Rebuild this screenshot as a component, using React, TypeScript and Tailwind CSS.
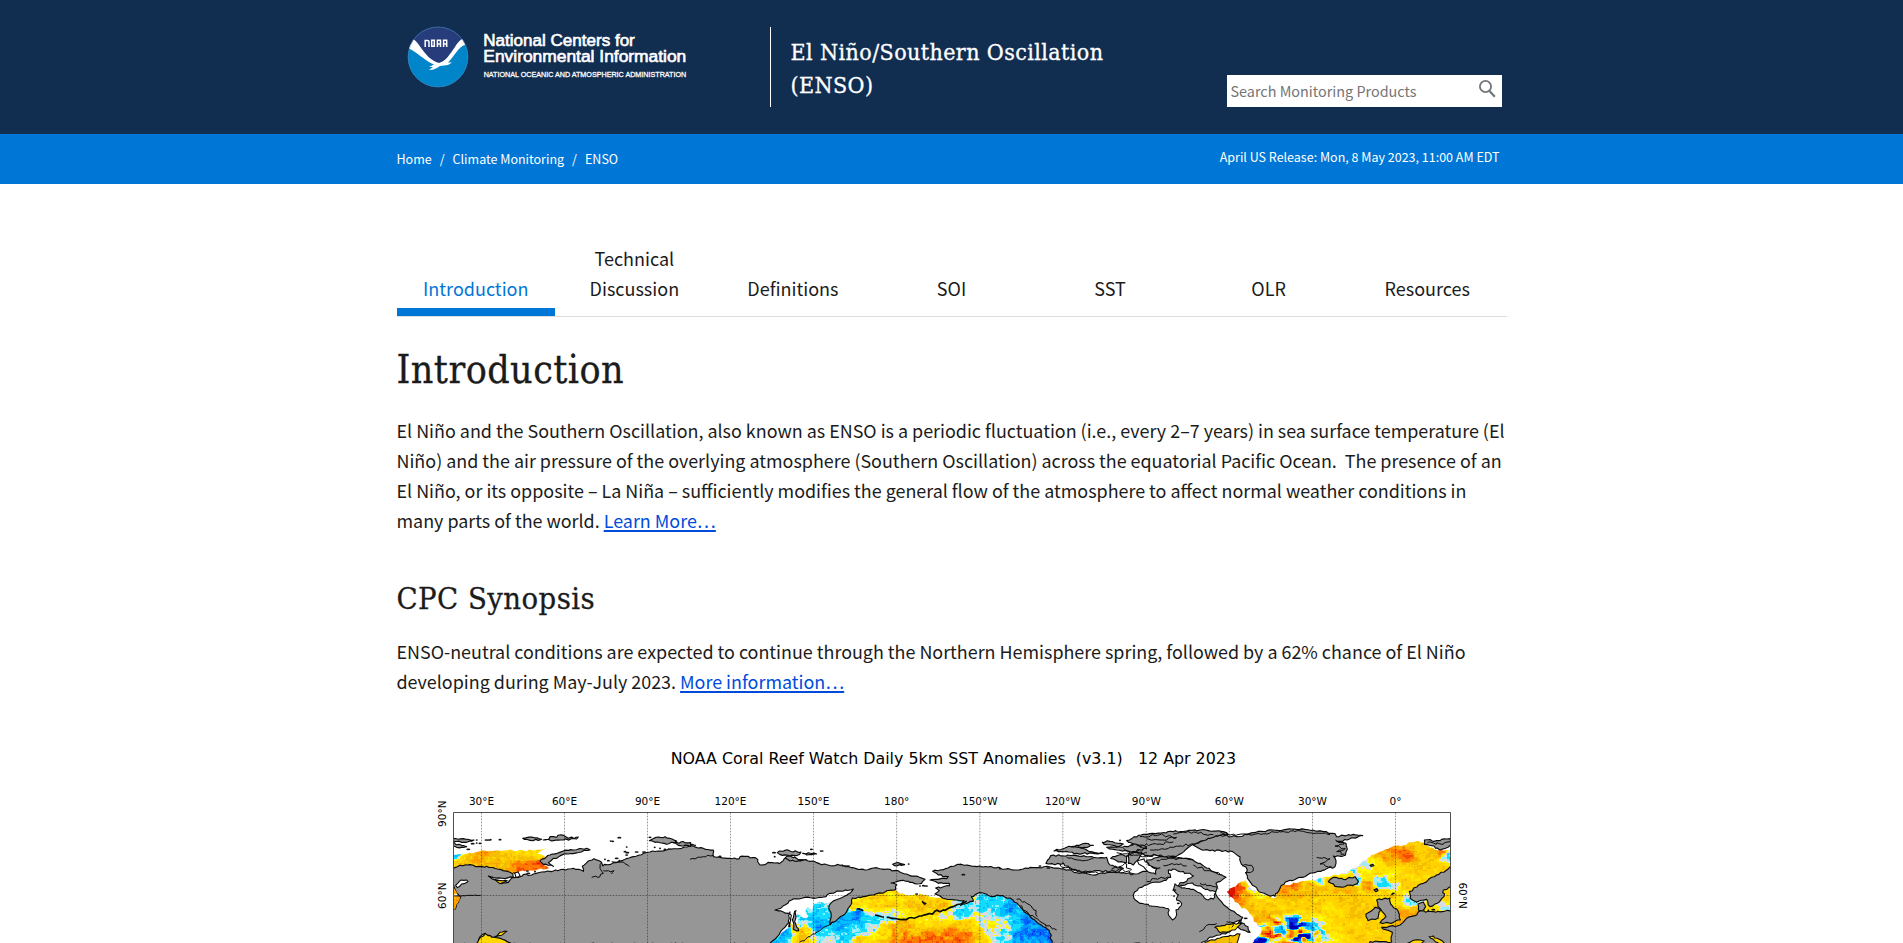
import React from 'react';

type Pt = [number, number];
type Control = [number, number, number];

/* Horizontal offsets of the four sections the coastline data is split into. */
const A = 0;
const B = 810;
const C = 1620;
const D = 2400;

const hash = (x: number, y: number) => {
  let h = (x * 374761393 + y * 668265263) | 0;
  h = Math.imul(h ^ (h >>> 13), 1274126177);
  return ((h ^ (h >>> 16)) >>> 0) / 4294967295;
};

const noise = (x: number, y: number) => {
  const xi = Math.floor(x);
  const yi = Math.floor(y);
  const u = x - xi;
  const v = y - yi;
  const su = u * u * (3 - 2 * u);
  const sv = v * v * (3 - 2 * v);
  const top = hash(xi, yi) * (1 - su) + hash(xi + 1, yi) * su;
  const bottom = hash(xi, yi + 1) * (1 - su) + hash(xi + 1, yi + 1) * su;
  return (top * (1 - sv) + bottom * sv) * 2 - 1;
};

const parse = (offset: number, s: string): Pt[] =>
  s.trim().split(/\s+/).map((p) => {
    const [x, y] = p.split(',').map(Number);
    return [x + offset, y] as Pt;
  });

/* Joins points, adding small deterministic wiggles so that a coast looks ragged. */
const coast = (pts: Pt[], rough = 3, closed = true) => {
  const out: string[] = [];
  const n = closed ? pts.length : pts.length - 1;
  for (let i = 0; i < n; i++) {
    const [x0, y0] = pts[i];
    const [x1, y1] = pts[(i + 1) % pts.length];
    const steps = Math.max(1, Math.round(Math.hypot(x1 - x0, y1 - y0) / 8));
    for (let k = 0; k < steps; k++) {
      const t = k / steps;
      const x = x0 + (x1 - x0) * t;
      const y = y0 + (y1 - y0) * t;
      const j = k === 0 ? 0 : rough;
      const dx = (hash(Math.round(x), Math.round(y)) - 0.5) * 2 * j;
      const dy = (hash(Math.round(y) + 71, Math.round(x)) - 0.5) * 2 * j;
      out.push(`${(x + dx).toFixed(1)},${(y + dy).toFixed(1)}`);
    }
  }
  if (!closed) out.push(pts[pts.length - 1].join(','));
  return 'M' + out.join('L') + (closed ? 'Z' : '');
};

const SCALE: [number, string][] = [
  [-3.2, '#0000b4'],
  [-2.6, '#0032e6'],
  [-2.1, '#0064ff'],
  [-1.6, '#0096ff'],
  [-1.1, '#00beff'],
  [-0.6, '#14dcff'],
  [-0.3, '#8cf0ff'],
  [0.15, '#dcdcdc'],
  [0.5, '#ffff00'],
  [1.0, '#ffe600'],
  [1.4, '#ffd200'],
  [1.8, '#f5be00'],
  [2.2, '#ffa000'],
  [2.7, '#ff7800'],
  [3.3, '#f54b00'],
  [9, '#dc1400'],
];

/* Strength of the swirling eddies around a point of the north-west Atlantic. */
const eddy = (x: number, y: number) => {
  const r = ((x - D - 205) / 105) ** 2 + ((y - 572) / 48) ** 2;
  return Math.exp(-r * r);
};

/* Interpolates the anomaly control points and returns one path per colour step. */
const seaCells = (
  x0: number, y0: number, x1: number, y1: number,
  controls: Control[], amp: number,
) => {
  const size = 4;
  const layers: Record<string, string> = {};
  for (let y = y0; y < y1; y += size) {
    let run = '';
    let start = x0;
    for (let x = x0; x <= x1 + size; x += size) {
      const wx = x + noise(x / 18, y / 18 + 9) * 13;
      const wy = y + noise(x / 18 + 60, y / 18) * 10;
      let sum = 0;
      let total = 0;
      for (const [cx, cy, v] of controls) {
        const d = (wx - cx) ** 2 + ((wy - cy) * 1.4) ** 2 + 110;
        const w = 1 / (d * d);
        sum += v * w;
        total += w;
      }
      const value = sum / total
        + noise(x / 30, y / 16) * amp * 0.7
        + noise(x / 11 + 40, y / 8) * amp * 0.9
        + noise(x / 5, y / 4.5) * amp * 0.7
        + eddy(x, y) * (noise(wx / 19 + 7, wy / 13 + 3) * 4.6 - 0.9);
      const colour = x > x1 ? '' : (SCALE.find(([limit]) => value < limit) || SCALE[15])[1];
      if (colour !== run) {
        if (run) {
          layers[run] = (layers[run] || '') + `M${start} ${y}H${x}V${y + size}H${start}Z`;
        }
        run = colour;
        start = x;
      }
    }
  }
  return Object.entries(layers);
};

const barents = seaCells(99, 320, 390, 404, [
  [110, 360, 1.6], [180, 350, 1.8], [240, 350, 1.4], [300, 340, 1.2], [350, 335, 1.1],
  [340, 368, 2.8], [300, 385, 2.6], [365, 380, 2.7], [250, 375, 1.8], [103, 348, -1.5], [140, 350, 1.5],
], 0.4);

const southWest = seaCells(99, 420, 290, 609, [
  [105, 480, 1.9], [200, 590, 1.3], [230, 605, 2], [250, 580, 1.1], [250, 420, 1.1],
], 0.35);

const pacific = seaCells(B + 230, 440, C + 300, 609, [
  [B + 285, 585, -1.9], [B + 262, 604, -1.2], [B + 330, 575, 1.6], [B + 335, 600, 1.3],
  [B + 340, 510, -0.6], [B + 370, 530, -1.2], [B + 375, 550, -1.6], [B + 400, 495, -0.8],
  [B + 395, 580, -1.0], [B + 440, 560, -1.3], [B + 480, 530, -1.5], [B + 500, 525, -2],
  [B + 470, 590, -0.9], [B + 520, 560, -0.6], [B + 545, 535, -0.5], [B + 560, 590, 1],
  [B + 500, 605, 1.6], [B + 400, 608, 0], [B + 500, 490, 0.9], [B + 545, 500, 0.5],
  [B + 560, 475, 0.9], [B + 600, 490, 1.1], [B + 600, 520, -0.4], [B + 660, 485, 1.2],
  [B + 700, 510, 1.1], [B + 750, 490, 1.4], [B + 620, 560, 1.6], [B + 680, 570, 1.9],
  [B + 650, 600, 2.6], [B + 720, 595, 2.8], [B + 740, 560, 1.4], [B + 780, 575, 2.3],
  [B + 790, 605, 2.8], [B + 780, 525, 0], [B + 800, 510, -0.7], [B + 690, 540, 1],
  [C + 10, 560, 1.4], [C + 15, 595, 2.4], [C + 50, 570, 1.2], [C + 60, 600, 1.2],
  [C + 15, 515, -0.8], [C + 40, 520, 0], [C + 65, 500, -1], [C + 80, 530, -0.3],
  [C + 90, 555, 0], [C + 100, 580, 0], [C + 130, 545, -0.2], [C + 125, 595, -0.4],
  [C + 110, 480, -0.8], [C + 145, 500, -1.6], [C + 165, 520, -1.4], [C + 170, 560, -1.2],
  [C + 190, 550, -1.9], [C + 220, 570, -2.3], [C + 250, 590, -2.2], [C + 180, 595, -1.7],
], 0.55);

const atlantic = seaCells(D - 70, 298, D + 693, 609, [
  [D + 30, 455, 4.2], [D + 40, 445, 3.4], [D + 55, 448, 2.8], [D + 72, 428, 1.3], [D + 100, 442, -0.4],
  [D + 40, 472, 3], [D + 52, 485, 2.2], [D + 75, 465, 1.5], [D + 108, 462, 0.4], [D + 80, 500, 1.7],
  [D + 120, 490, 1.3], [D + 100, 520, 1.6], [D + 125, 540, 1.8], [D + 130, 580, 0.3],
  [D + 108, 605, -3.4], [D + 165, 550, 2], [D + 210, 560, 0.6], [D + 260, 560, 0.4], [D + 290, 585, 0.2],
  [D + 185, 590, 0.6], [D + 330, 590, 0.6], [D + 345, 570, 0.9], [D + 160, 485, 1.3], [D + 200, 500, 1.2],
  [D + 240, 495, 1.1], [D + 210, 433, 2.4], [D + 190, 455, 1.9], [D + 230, 460, 1.6],
  [D + 290, 412, -0.6], [D + 280, 440, 1.6], [D + 350, 470, 1.5], [D + 390, 450, 1.7], [D + 360, 540, 1.2],
  [D + 300, 480, 1.4], [D + 320, 510, 1], [D + 420, 500, 1.4], [D + 400, 570, 1.3], [D + 380, 600, 1.1],
  [D + 440, 460, 1.2], [D + 400, 540, 1.3], [D + 390, 392, -0.9], [D + 340, 430, 1.5], [D + 380, 408, 1],
  [D + 425, 385, 0.4], [D + 440, 372, -0.2], [D + 470, 365, 1], [D + 415, 425, -0.9], [D + 435, 430, 2.4],
  [D + 450, 412, 0.7], [D + 480, 422, -0.5], [D + 492, 430, -1.2], [D + 510, 434, -0.2], [D + 470, 395, 1.1],
  [D + 490, 448, 1.1], [D + 500, 385, 1.1], [D + 525, 415, 1], [D + 490, 345, 2], [D + 530, 340, 2.4],
  [D + 560, 348, 2.7], [D + 600, 340, 1.5], [D + 580, 320, 1.3], [D + 640, 350, 1.4], [D + 620, 365, 1.3],
  [D + 684, 343, -1], [D + 665, 333, 2.3], [D + 600, 390, 1.2], [D + 650, 375, 1.2], [D + 550, 430, 1.4],
  [D + 550, 380, 1.2], [D + 568, 484, -0.6], [D + 550, 510, 1.8], [D + 570, 515, 1.8], [D + 530, 465, 1.3],
  [D + 680, 470, 1.1], [D + 668, 502, -0.4], [D + 640, 505, 1], [D + 470, 580, 1.2], [D, 580, 1.8],
  [D - 30, 600, 1.9],
], 0.36);

const barentsClip = coast(parse(A, '99,345 140,341 180,333 240,333 300,330 345,331 378,323 350,341 375,350 360,362 372,375 388,385 340,392 300,394 270,402 240,395 200,390 150,380 99,388'), 3);

const southWestClip = [
  coast(parse(A, '99,440 112,462 99,465'), 1),
  coast(parse(A, '99,468 122,470 114,488 106,507 99,507'), 2),
].join('');

const pacificClip = coast([
  ...parse(B, '236,612 262,592 298,560 300,530 330,498 380,482 420,485 440,520 487,478 520,468 560,460 590,450 616,450 630,462 700,464 740,474 800,480'),
  ...parse(C, '10,480 60,458 150,470 200,520 285,575 276,612'),
], 4);

const atlanticClip = coast(parse(D, '20,455 45,440 75,418 92,445 120,460 165,474 182,440 240,425 300,415 370,400 400,385 450,352 500,327 550,315 590,304 612,306 640,325 691,333 693,612 95,612 125,570 100,535 75,505 45,487'), 4);

const asia: Pt[] = [
  ...parse(A, '95,384 120,376 150,374 175,380 200,379 240,388 278,401 280,412 255,416 205,408 225,420 245,431 265,427 275,414 296,412 310,404 335,405 365,396 400,393 430,388 460,385 490,394 487,379 505,363 522,356 543,365 548,378 580,368 605,362 640,350 690,336 740,330 785,325'),
  ...parse(B, '0,318 70,330 70,350 120,355 148,356 150,350 196,353 210,375 240,368 268,371 290,352 325,360 370,363 395,374 450,376 490,383 525,390 560,383 600,388 650,402 705,418 695,430 675,431 640,421 622,424 603,429 620,434 617,449 560,461 520,470 487,474 485,490 470,515 445,536 420,555 424,528 417,500 425,487 455,473 482,458 490,447 450,453 420,460 408,470 380,474 345,472 305,480 285,495 255,510 280,516 298,520 302,540 280,566 262,590 238,612'),
  ...parse(A, '276,612 235,594 215,592 196,580 180,590 168,612 95,612 95,507 106,507 115,487 122,473 115,464 102,440 95,430'),
];

const northAmerica: Pt[] = [
  ...parse(B, '812,374 780,380 750,390 728,394 745,405 775,410 770,416 720,420 745,430 778,430 778,438 737,444 748,452 735,462 765,476 800,480'),
  ...parse(C, '12,482 2,497 40,484 34,470 60,458 78,462 95,470 112,465 150,474 172,490 190,512 206,524 218,537 245,556 268,572 276,612 722,612 745,595 780,585 810,575'),
  ...parse(D, '40,548 62,540 48,560 90,577 84,560 62,548 68,532 35,512 8,490 -15,458 -8,440 -12,430 0,425 18,412 -10,400 -40,384 -60,370 -100,355 -170,350'),
  ...parse(C, '560,360 568,380 600,384 560,394 525,402 490,398 450,397 410,404 360,400 310,386 270,381 220,383 165,390 110,383 60,378 0,372'),
];

const islands: Pt[][] = [
  parse(A, '95,295 130,296 162,300 140,307 95,303'),
  parse(A, '95,308 125,316 140,320 110,322 95,314'),
  parse(A, '360,362 390,345 430,333 500,325 510,329 445,342 400,355 385,368 400,379 370,373'),
  parse(A, '308,295 335,291 365,298 330,301'),
  parse(A, '370,300 400,290 430,286 445,295 475,291 470,297 430,300 400,302'),
  parse(A, '688,302 705,293 735,290 770,303 740,313 705,307'),
  parse(A, '762,309 790,305 812,308 812,319 775,316'),
  parse(B, '262,338 285,331 333,336 322,346 270,344'),
  parse(B, '338,340 380,342 350,345'),
  parse(B, '286,354 300,348 340,360 300,363'),
  parse(B, '608,373 625,368 644,374 620,378'),
  parse(C, '500,302 535,286 570,281 640,275 720,270 790,275 805,283 775,288 745,297 700,312 665,340 648,350 560,346 522,337 560,321 520,312'),
  parse(C, '282,333 320,322 350,320 380,330 430,340 350,340'),
  parse(C, '335,320 375,310 400,316 380,323'),
  parse(C, '427,307 450,304 490,312 470,320 440,314'),
  parse(C, '440,322 500,320 520,312 560,325 520,335 470,330'),
  parse(C, '258,370 272,347 340,346 400,352 440,352 450,375 490,385 470,398 420,392 370,396 330,387 310,369 285,374'),
  parse(C, '452,355 475,346 503,347 500,368 475,366'),
  parse(C, '508,340 545,336 540,350 520,375 505,370'),
  parse(C, '582,430 612,425 632,436 610,445 585,440'),
  [
    ...parse(D, '0,286 50,290 100,278 160,270 240,268 310,275 345,281 350,290 400,283 428,287 390,296 350,304 378,310 382,328 376,346 340,348 348,370 345,380 270,400 248,412 196,426 180,445 165,469 145,466 118,456 92,428 78,400 82,390 64,372 60,350 38,335 0,331'),
    ...parse(C, '750,332 722,328 700,316 745,295'),
  ],
  parse(D, '325,425 340,412 370,418 405,410 415,424 398,437 350,440'),
  parse(D, '613,300 650,302 691,296 700,315 660,330 635,317 613,313'),
  parse(D, '700,380 650,405 610,430 568,455 570,475 590,487 620,478 630,500 652,490 672,470 670,450 700,436'),
  parse(D, '594,492 610,486 617,500 606,514 595,510'),
  parse(D, '700,513 640,515 595,515 590,525 560,535 540,555 485,562 500,570 517,577 515,606 450,605 446,615 700,615'),
  parse(D, '470,480 510,474 512,492 535,515 541,540 510,550 480,548 498,530 480,505'),
  parse(D, '438,522 465,502 482,510 474,535 444,542'),
  parse(B, '318,512 314,545 326,572 310,568 307,540 314,514'),
  parse(D, '462,449 470,446 474,452 467,455'),
  parse(D, '450,376 458,373 462,377 453,379'),
];

const icyWater: Pt[][] = [
  parse(C, '520,465 535,445 570,430 605,425 632,412 625,390 645,388 660,395 690,400 700,408 680,424 660,428 658,440 645,432 640,450 655,465 650,480 665,490 655,508 648,510 650,525 638,540 626,526 625,506 600,502 540,490 526,480'),
  parse(C, '662,436 690,430 725,440 750,453 768,456 764,472 745,480 728,466 700,448 664,444'),
  parse(C, '532,362 552,357 565,375 590,388 587,402 565,396 545,377'),
  parse(A, '107,436 118,424 140,420 144,425 125,432 112,443'),
  parse(A, '280,398 294,396 300,406 288,412'),
  parse(B, '300,515 302,535 300,560 296,560 298,535'),
];

const yellowInlets: Pt[][] = [
  parse(C, '765,562 800,552 845,550 825,570 780,578'),
  parse(C, '735,607 780,594 840,582 830,612 735,612'),
  parse(A, '170,612 182,592 196,581 215,592 235,594 276,612'),
  parse(A, '224,590 240,577 260,574 245,586'),
  parse(A, '225,418 262,423 240,431'),
  parse(D, '555,612 585,600 612,603 600,612'),
  parse(D, '628,590 640,588 672,608 660,612'),
];

const coastDetails: string[] = [
  coast(parse(A, '545,368 540,385 550,400 540,410 515,412'), 4, false),
  coast(parse(A, '550,392 582,392 575,402'), 4, false),
  coast(parse(A, '575,365 610,366 628,380'), 3, false),
  coast(parse(A, '104,468 150,466 182,466'), 2, false),
  coast(parse(B, '0,358 40,350 70,346'), 2, false),
  coast(parse(B, '430,545 400,562 360,590 328,607'), 3, false),
  coast(parse(C, '170,478 200,490 222,510 232,530'), 6, false),
  coast(parse(C, '182,495 205,520 240,545 290,570'), 5, false),
  coast(parse(C, '540,290 600,284 650,292 600,300 560,296'), 4, false),
  coast(parse(C, '640,282 700,276 760,284'), 4, false),
  coast(parse(C, '570,330 640,322 700,312'), 4, false),
  coast(parse(C, '530,318 600,312 640,306'), 4, false),
  coast(parse(C, '470,338 520,345 560,350 600,345'), 5, false),
  coast(parse(C, '490,326 510,334 505,342 560,338'), 5, false),
  coast(parse(C, '440,398 480,386 520,404'), 6, false),
  coast(parse(C, '455,386 500,372 512,392'), 6, false),
  coast(parse(C, '300,375 340,390 415,400'), 4, false),
  coast(parse(C, '320,352 360,360 400,356'), 4, false),
  coast(parse(C, '590,362 640,355 700,360'), 4, false),
  coast(parse(C, '610,376 650,372 680,378'), 4, false),
  coast(parse(C, '700,375 740,392 780,402'), 4, false),
  coast(parse(C, '720,430 750,436 775,446'), 4, false),
  coast(parse(C, '560,424 580,416 630,412'), 4, false),
  coast(parse(C, '718,575 740,556 770,550'), 3, false),
  coast(parse(D, '346,300 372,312 345,318 376,326 350,335 374,342'), 5, false),
  coast(parse(D, '290,352 330,356 300,372 335,380'), 3, false),
  coast(parse(D, '68,378 95,376 100,392 75,398'), 4, false),
  coast(parse(D, '0,275 30,285 100,284 180,274'), 3, false),
  coast(parse(D, '180,276 250,274 330,284'), 3, false),
  coast(parse(D, '20,545 40,548 35,562'), 3, false),
  coast(parse(D, '622,308 660,312 690,305'), 4, false),
];

const specks: Pt[] = [
  ...parse(A, '170,300 198,300 206,300 212,299 240,299 158,311 170,309 180,310 145,328 572,303 578,304 598,293 620,321 690,292 672,336 704,322 615,335 622,338 555,358 565,362 590,355 598,362 620,345 650,336 720,325 735,328 325,400 345,395 322,393'),
  ...parse(B, '6,314 15,316 90,349 252,338 254,350 364,328 395,333 458,377 466,378 474,378 656,372 700,437 708,438 690,438 680,462 704,490'),
  ...parse(C, '480,301 516,315 643,450 642,468 655,490 10,404 120,386 240,378 265,384'),
  ...parse(D, '516,463 520,460 640,509 625,511 470,448 77,535'),
];

const aleutians = coast(parse(B, '500,507 520,512'), 2, false)
  + coast(parse(B, '555,525 582,531'), 2, false)
  + coast(parse(B, '590,532 604,535 640,538 680,532 720,520'), 2, false)
  + coast([...parse(B, '720,521 760,510 790,500 812,492'), ...parse(C, '20,484')], 4, false)
  + coast(parse(B, '696,484 706,494'), 1, false);

const meridians: [number, string][] = [
  [184.5, '30°E'], [433.5, '60°E'], [682.5, '90°E'], [931.5, '120°E'], [1180.5, '150°E'], [1430, '180°'],
  [1679.5, '150°W'], [1928.5, '120°W'], [2179, '90°W'], [2428, '60°W'], [2677.5, '30°W'], [2926.5, '0°'],
];

const Cells = ({ data }: { data: [string, string][] }) => (
  <g shapeRendering="crispEdges">
    {data.map(([colour, d]) => <path key={colour} d={d} fill={colour} />)}
  </g>
);

function AnomalyMap() {
  return (
    <svg viewBox="0 0 3240 609" className="h-[203px] w-[1080px] shrink-0" role="img" aria-label="Sea surface temperature anomalies">
      <defs>
        <clipPath id="frame"><rect x="101" y="216" width="2990" height="400" /></clipPath>
        <clipPath id="barents"><path d={barentsClip} /></clipPath>
        <clipPath id="southwest"><path d={southWestClip} /></clipPath>
        <clipPath id="pacific"><path d={pacificClip} /></clipPath>
        <clipPath id="atlantic"><path d={atlanticClip} /></clipPath>
      </defs>
      <g clipPath="url(#frame)">
        <g clipPath="url(#barents)"><Cells data={barents} /></g>
        <g clipPath="url(#pacific)"><Cells data={pacific} /></g>
        <g clipPath="url(#atlantic)"><Cells data={atlantic} /></g>
        <path d={coast(parse(B, '255,510 310,478 380,474 412,470 420,484 380,490 366,510 352,500 350,535 322,520 318,560 300,550 300,520'), 6)} fill="#fff" />
        <g fill="#969696" stroke="#0a0a0a" strokeWidth="3.4" strokeLinejoin="round">
          <path d={coast(asia, 2.6)} />
          <path d={coast(northAmerica, 2.8)} />
          {islands.map((p, i) => <path key={i} d={coast(p, 2.8)} />)}
        </g>
        <g clipPath="url(#southwest)"><Cells data={southWest} /></g>
        <g stroke="#0a0a0a" strokeWidth="3.2">
          {icyWater.map((p, i) => <path key={i} d={coast(p, 3)} fill="#fff" />)}
          {yellowInlets.map((p, i) => <path key={i} d={coast(p, 2.4)} fill={i % 3 === 1 ? '#f5be00' : '#ffd800'} />)}
        </g>
        <g fill="none" stroke="#0a0a0a" strokeWidth="3">
          {coastDetails.map((d, i) => <path key={i} d={d} />)}
          <path d={aleutians} strokeWidth="5" />
        </g>
        {specks.map(([x, y], i) => (
          <ellipse key={i} cx={x} cy={y} rx={3 + (i % 3) * 1.6} ry="2.6" fill="#111" />
        ))}
      </g>
      <g stroke="#000" strokeWidth="2.4" strokeDasharray="5 4" opacity="0.5">
        {meridians.map(([x]) => <path key={x} d={`M${x} 218V609`} />)}
        <path d="M101 466.5H3091" />
      </g>
      <path d="M100.5 609V217.5H3091.5V609" fill="none" stroke="#333" strokeWidth="2.6" />
      <g fill="#000" textAnchor="middle" style={{ fontFamily: '"DejaVu Sans", sans-serif' }}>
        <text x="1600" y="73" fontSize="46" textLength="1696" lengthAdjust="spacingAndGlyphs" style={{ whiteSpace: 'pre' }}>
          {'NOAA Coral Reef Watch Daily 5km SST Anomalies  (v3.1)   12 Apr 2023'}
        </text>
        <g fontSize="31.5">
          {meridians.map(([x, label]) => <text key={label} x={x} y="195">{label}</text>)}
          <text transform="translate(77 221) rotate(-90)">90°N</text>
          <text transform="translate(77 467) rotate(-90)">60°N</text>
          <text transform="translate(3118 467) rotate(90)">60°N</text>
        </g>
      </g>
    </svg>
  );
}

function Logo() {
  return (
    <svg viewBox="0 0 350 66" className="h-[66px] w-[350px]" role="img" aria-label="NOAA National Centers for Environmental Information">
      <defs>
        <clipPath id="disc"><circle cx="33" cy="33" r="30.2" /></clipPath>
      </defs>
      <g clipPath="url(#disc)">
        <rect width="66" height="66" fill="#0085ca" />
        <path d="M0 0H66V12L36 40H31L0 12Z" fill="#273c7a" />
        <path d="M5 15C8 14 11 17 14 21C20 30 26 37 34 39C41 37 45 30 50 23C53 18 56 14.500 59 15C61 17 61 19 60 21C54 22 48 34 43 38.500L47 38.500L43 41L35 42C32 44 29 46 24 46L28 43L24 43L29 40.500C20 37 12 28 3 24Z" fill="#fff" />
      </g>
      <circle cx="33" cy="33" r="29.900" fill="none" stroke="#5a86b4" strokeWidth="0.500" />
      <g fill="none" stroke="#fff" strokeWidth="1.500">
        <path d="M20.200 23V16.500H22.500Q24 16.500 24 18V23" />
        <path d="M26.700 16.200H29.300V22.300H26.700Z" />
        <path d="M32.400 23V16.200H35.500V23M32.400 20H35.500" />
        <path d="M38.600 23V16.200H41.700V23M38.600 20H41.700" />
      </g>
      <g fill="#fff" style={{ fontFamily: '"Liberation Sans", Arial, sans-serif' }}>
        <g stroke="#fff" strokeWidth="0.650">
          <text x="78.300" y="22" fontSize="17.300" textLength="151.500" lengthAdjust="spacingAndGlyphs">National Centers for</text>
          <text x="78.300" y="38.300" fontSize="17.300" textLength="203" lengthAdjust="spacingAndGlyphs">Environmental Information</text>
        </g>
        <text x="78.700" y="52.500" fontSize="8" stroke="#fff" strokeWidth="0.300" textLength="202.500" lengthAdjust="spacingAndGlyphs">NATIONAL OCEANIC AND ATMOSPHERIC ADMINISTRATION</text>
      </g>
    </svg>
  );
}

const tabs = ['Introduction', 'Technical Discussion', 'Definitions', 'SOI', 'SST', 'OLR', 'Resources'];

const introLines = [
  'El Niño and the Southern Oscillation, also known as ENSO is a periodic fluctuation (i.e., every 2–7 years) in sea surface temperature (El',
  'Niño) and the air pressure of the overlying atmosphere (Southern Oscillation) across the equatorial Pacific Ocean.  The presence of an',
  'El Niño, or its opposite – La Niña – sufficiently modifies the general flow of the atmosphere to affect normal weather conditions in',
];

const serif = "font-['DejaVu_Serif_Condensed','DejaVu_Serif',serif] [font-stretch:condensed]";
const link = 'text-[#004bdc] underline decoration-2 underline-offset-2';

export default function App() {
  return (
    <div className="h-[943px] overflow-hidden bg-white font-['Noto_Sans_CJK_SC',sans-serif] text-[#1b1b1b]">
      <header className="h-[134px] bg-[#112e51]">
        <div className="mx-auto flex w-[1110px] pt-[27px]">
          <div className="-mt-[3px] w-[373px] pl-2"><Logo /></div>
          <div className={`h-20 w-[380px] border-l border-white pl-5 pt-[9px] text-[23px] leading-[33px] tracking-[0.41px] text-white [-webkit-text-stroke:0.3px] ${serif}`}>
            El Niño/Southern Oscillation<br />(ENSO)
          </div>
          <div className="ml-auto mr-[5px] mt-12 flex h-8 w-[275px] justify-between bg-white pl-1 pr-[6px]">
            <span className="text-[14.4px] leading-8 text-[#757575]">Search Monitoring Products</span>
            <svg viewBox="0 0 18 18" className="mt-[5px] h-[18px] w-[18px]" fill="none" stroke="#71767a" strokeWidth="1.8">
              <circle cx="7.500" cy="6.500" r="5.600" />
              <path d="M11.500 11L16.800 16.800" strokeWidth="2.200" />
            </svg>
          </div>
        </div>
      </header>
      <div className="h-[50px] bg-[#0076d6] text-white">
        <div className="mx-auto flex w-[1110px] justify-between pr-[7px] text-[12.5px]">
          <nav className="flex gap-2 leading-[50px]">
            <a>Home</a><span>/</span><a>Climate Monitoring</a><span>/</span><a>ENSO</a>
          </nav>
          <span className="leading-[46px]">April US Release: Mon, 8 May 2023, 11:00 AM EDT</span>
        </div>
      </div>
      <main className="mx-auto w-[1110px] pt-[59px]">
        <ul className="grid h-[74px] grid-cols-7 border-b border-[#dcdee0] text-center text-[18px] leading-[30px]">
          {tabs.map((tab, i) => (
            <li
              key={tab}
              className={i === 0
                ? 'flex items-end justify-center border-b-8 border-[#0076d6] pb-[5px] text-[#0076d6]'
                : 'flex items-end justify-center px-6 pb-[13px]'}
            >
              {tab}
            </li>
          ))}
        </ul>
        <h1 className={`mt-[28px] text-[39px] leading-[50px] tracking-[0.45px] [-webkit-text-stroke:0.3px] ${serif}`}>Introduction</h1>
        <div className="mt-[20px] text-[17.920px] leading-[30px]">
          {introLines.map((line) => <p key={line} className="whitespace-pre">{line}</p>)}
          <p className="flex gap-[4px]">
            <span>many parts of the world.</span>
            <a className={link}>Learn More…</a>
          </p>
        </div>
        <h2 className={`mt-[44px] text-[30.700px] leading-10 tracking-[0.45px] [-webkit-text-stroke:0.3px] ${serif}`}>CPC Synopsis</h2>
        <div className="mt-[17px] text-[17.920px] leading-[30px]">
          <p className="whitespace-pre">ENSO-neutral conditions are expected to continue through the Northern Hemisphere spring, followed by a 62% chance of El Niño</p>
          <p className="flex gap-[4px]">
            <span>developing during May-July 2023.</span>
            <a className={link}>More information…</a>
          </p>
        </div>
        <div className="mt-[44px] flex pl-[23.500px]"><AnomalyMap /></div>
      </main>
    </div>
  );
}
